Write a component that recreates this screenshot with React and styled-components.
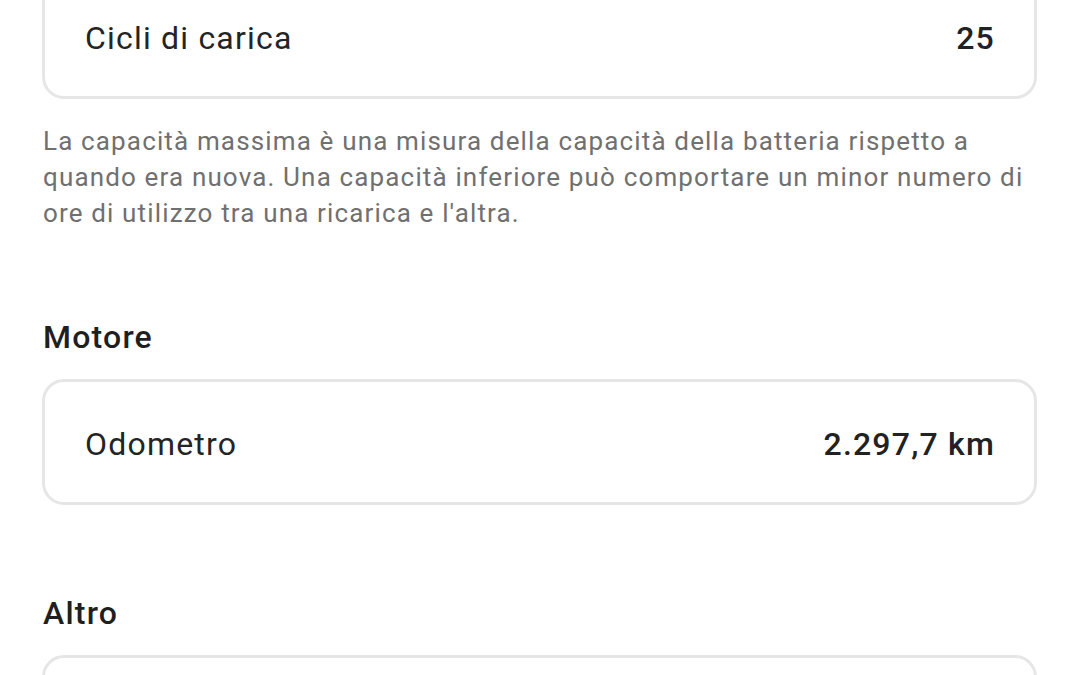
import React from "react";
import styled, { createGlobalStyle } from "styled-components";

const Global = createGlobalStyle`
  html, body { margin: 0; padding: 0; background: #ffffff; overflow: hidden; }
  body { font-family: Roboto, "Liberation Sans", sans-serif; }
`;

const Page = styled.div`
  width: 1080px;
  height: 675px;
  overflow: hidden;
  box-sizing: border-box;
  padding: 0 43px 0 42px;
`;

const Scroll = styled.div`
  margin-top: -27px;
  display: flex;
  flex-direction: column;
`;

const Section = styled.section`
  display: flex;
  flex-direction: column;
  margin-top: ${(p) => p.$gap || 0}px;
`;

const Heading = styled.h2`
  margin: 0 0 22px 1px;
  font-size: 32px;
  line-height: 40px;
  font-weight: 500;
  color: #1f1f1f;
  letter-spacing: 1.2px;
`;

const Card = styled.div`
  box-sizing: border-box;
  border: 3px solid #e6e6e6;
  border-radius: 22px;
  background: #ffffff;
  height: 126px;
  padding: 3px 40px 0;
  display: flex;
  align-items: center;
  justify-content: space-between;
`;

const Label = styled.span`
  font-size: 32px;
  font-weight: 400;
  color: #242424;
  letter-spacing: 1.2px;
`;

const Value = styled.span`
  font-size: 32px;
  font-weight: 500;
  color: #222222;
  letter-spacing: 1.2px;
  margin-right: -1px;
`;

const Note = styled.p`
  margin: 24px 0 0 1px;
  font-size: 26px;
  line-height: 36px;
  color: #707070;
  letter-spacing: 1.15px;
`;

export default function App() {
  return (
    <>
      <Global />
      <Page>
        <Scroll>
          <Section>
            <Card>
              <Label>Cicli di carica</Label>
              <Value>25</Value>
            </Card>
            <Note>
              La capacità massima è una misura della capacità della batteria rispetto a quando era nuova. Una capacità inferiore può comportare un minor numero di ore di utilizzo tra una ricarica e l'altra.
            </Note>
          </Section>
          <Section $gap={86}>
            <Heading>Motore</Heading>
            <Card>
              <Label>Odometro</Label>
              <Value>2.297,7 km</Value>
            </Card>
          </Section>
          <Section $gap={88}>
            <Heading>Altro</Heading>
            <Card>
              <Label>&nbsp;</Label>
            </Card>
          </Section>
        </Scroll>
      </Page>
    </>
  );
}
